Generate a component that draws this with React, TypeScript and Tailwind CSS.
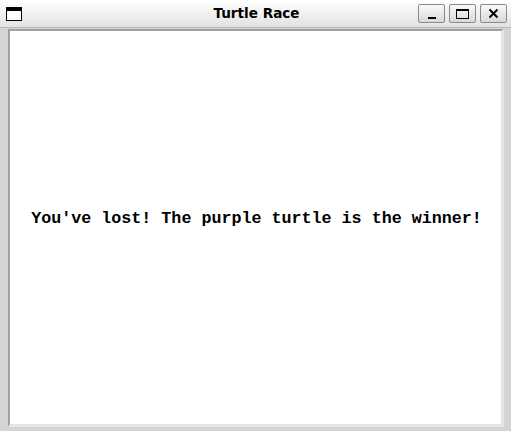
import React from 'react';

const WinButton: React.FC<{ children: React.ReactNode }> = ({ children }) => (
  <div className="flex h-[19px] w-[27px] items-center justify-center rounded-[2px] border border-[#8a8a8a] bg-gradient-to-b from-[#fafafa] to-[#d8d8d8]">
    {children}
  </div>
);

export default function App() {
  return (
    <div className="flex h-[431px] w-[511px] flex-col bg-[#d4d4d4]">
      {/* Title bar */}
      <div className="flex h-[28px] items-center border-b border-[#b8b8b8] bg-gradient-to-b from-white to-[#e2e2e2] pl-[6px] pr-[4px]">
        <div className="w-[89px]">
          <div className="flex h-[14px] w-[16px] flex-col border-[1.5px] border-black bg-white">
            <div className="h-[3px] bg-black" />
          </div>
        </div>
        <div
          className="flex-1 text-center text-[13.6px] font-bold text-black"
          style={{ fontFamily: '"DejaVu Sans", sans-serif' }}
        >
          Turtle Race
        </div>
        <div className="flex gap-[4px]">
          <WinButton>
            <div className="mt-[8px] h-[2px] w-[8px] bg-black" />
          </WinButton>
          <WinButton>
            <div className="h-[10px] w-[13px] border border-black border-t-[2px]" />
          </WinButton>
          <WinButton>
            <svg width="11" height="11" viewBox="0 0 11 11">
              <path d="M1.5 1.5 L9.5 9.5 M9.5 1.5 L1.5 9.5" stroke="black" strokeWidth="2" />
            </svg>
          </WinButton>
        </div>
      </div>

      {/* Frame + canvas */}
      <div className="flex-1 pl-[8px] pr-[7px] pt-[1px] pb-[4px]">
        <div className="flex h-full flex-col items-center border-b-[3px] border-l-[2px] border-r-[3px] border-t-[2px] border-b-[#e6e6e6] border-l-[#a0a0a0] border-r-[#e6e6e6] border-t-[#a0a0a0] bg-white pl-[2px] pt-[180px]">
          <p
            className="text-[16.7px] font-bold leading-none text-black"
            style={{ fontFamily: '"Liberation Mono", monospace' }}
          >
            You've lost! The purple turtle is the winner!
          </p>
        </div>
      </div>
    </div>
  );
}
